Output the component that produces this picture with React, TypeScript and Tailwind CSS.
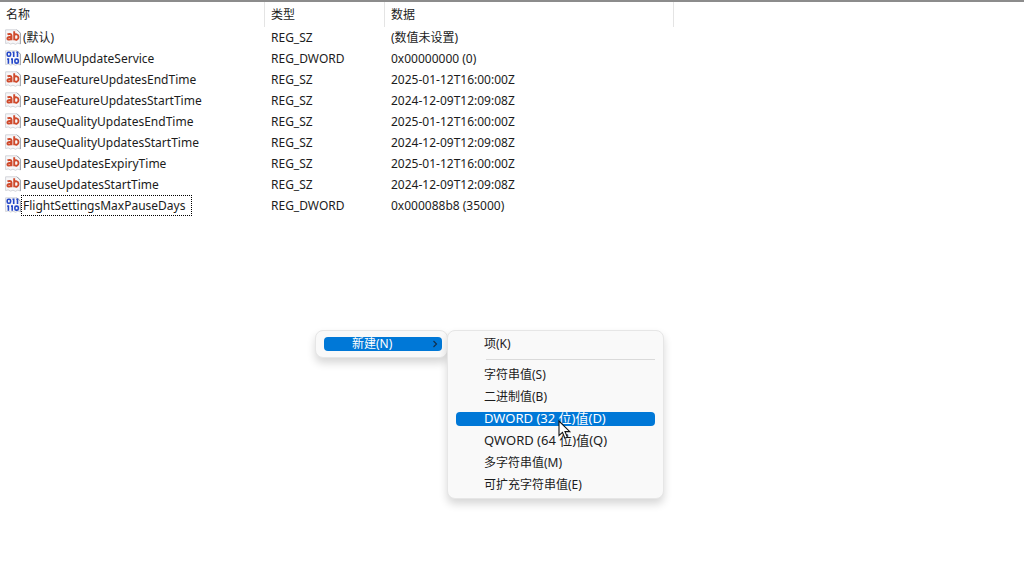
import clsx from 'clsx';

type RegistryValue = {
  name: string;
  type: 'REG_SZ' | 'REG_DWORD';
  data: string;
  focused?: boolean;
};

const values: RegistryValue[] = [
  { name: '(默认)', type: 'REG_SZ', data: '(数值未设置)' },
  { name: 'AllowMUUpdateService', type: 'REG_DWORD', data: '0x00000000 (0)' },
  { name: 'PauseFeatureUpdatesEndTime', type: 'REG_SZ', data: '2025-01-12T16:00:00Z' },
  { name: 'PauseFeatureUpdatesStartTime', type: 'REG_SZ', data: '2024-12-09T12:09:08Z' },
  { name: 'PauseQualityUpdatesEndTime', type: 'REG_SZ', data: '2025-01-12T16:00:00Z' },
  { name: 'PauseQualityUpdatesStartTime', type: 'REG_SZ', data: '2024-12-09T12:09:08Z' },
  { name: 'PauseUpdatesExpiryTime', type: 'REG_SZ', data: '2025-01-12T16:00:00Z' },
  { name: 'PauseUpdatesStartTime', type: 'REG_SZ', data: '2024-12-09T12:09:08Z' },
  { name: 'FlightSettingsMaxPauseDays', type: 'REG_DWORD', data: '0x000088b8 (35000)', focused: true },
];

const newItems = [
  '字符串值(S)',
  '二进制值(B)',
  'DWORD (32 位)值(D)',
  'QWORD (64 位)值(Q)',
  '多字符串值(M)',
  '可扩充字符串值(E)',
];

function ValueIcon({ type }: { type: RegistryValue['type'] }) {
  return (
    <svg viewBox="0 0 16 16" className="mb-0.5 h-4 w-4 shrink-0" aria-hidden="true">
      <path d="M.6 .8h11.4l3.4 3.4V15l-2.6-.9-2.3 1.2-2.5-1.1-2.4.9-2.4-1.2-2.6.6z" fill="#f7f7f9" stroke="#c9cbd1" strokeWidth=".8" />
      <path d="M12 .8l3.4 3.4V15" fill="none" stroke="#9a9da6" strokeWidth=".9" />
      {type === 'REG_SZ' ? (
        <g fill="none" stroke="#cf4a2c" strokeWidth="1.9">
          <path d="M2.5 5.6c1.2-.9 4-.9 4 1v4.6M6.5 7.8c-2.4-.1-4.1.2-4.1 1.6 0 1.7 3 1.6 4.1 0" />
          <path d="M9.2 2.2v9M9.2 6.3c1-1.6 4.3-1.4 4.3 1.8s-3.2 3.2-4.3 1.6" />
        </g>
      ) : (
        <g fill="none" stroke="#2447c8" strokeWidth="1.6">
          <rect x="2.2" y="2.2" width="3.4" height="4" rx="1.4" />
          <path d="M8.7 1.4v5.6M12.5 1.4v5.6M7.5 2.2h1.2M11.3 2.2h1.2" />
          <path d="M3.4 8.3v5.5M7.2 8.3v5.5M2.2 9.1h1.2M6 9.1h1.2" />
          <rect x="9.9" y="9.1" width="3.4" height="4" rx="1.4" />
        </g>
      )}
    </svg>
  );
}

function ValueTable() {
  return (
    <table className="w-full table-fixed border-separate border-spacing-0 text-left">
      <colgroup>
        <col className="w-[265px]" />
        <col className="w-[120px]" />
        <col className="w-[289px]" />
        <col />
      </colgroup>
      <thead>
        <tr className="h-[25px]">
          <th className="border-r border-[#e4e4e4] py-0 pl-1.5 font-normal">名称</th>
          <th className="border-r border-[#e4e4e4] py-0 pl-1.5 font-normal">类型</th>
          <th className="border-r border-[#e4e4e4] py-0 pl-1.5 font-normal">数据</th>
          <td />
        </tr>
      </thead>
      <tbody>
        {values.map((value) => (
          <tr key={value.name} className="h-[21px] whitespace-nowrap">
            <td className="py-0 pl-[5px]">
              <div className="flex h-[21px] items-center">
                <ValueIcon type={value.type} />
                <span
                  className={clsx(
                    'border px-px leading-[19px]',
                    value.focused ? 'border-dotted border-black pr-1.5' : 'border-transparent'
                  )}
                >
                  {value.name}
                </span>
              </div>
            </td>
            <td className="py-0 pl-1.5">{value.type}</td>
            <td className="py-0 pl-1.5">{value.data}</td>
            <td />
          </tr>
        ))}
      </tbody>
    </table>
  );
}

function Cursor() {
  return (
    <svg viewBox="0 0 14 20" className="pointer-events-none absolute top-[89px] left-[110px] h-5 w-3.5" aria-hidden="true">
      <path d="M1 1v14.5l3.5-3.1 2.4 5.8 2.5-1-2.4-5.6h4.8z" fill="#fff" stroke="#111" strokeWidth="1.1" />
    </svg>
  );
}

const panel = 'rounded-lg border border-[#e6e6e6] bg-[#f9f9f9] shadow-[0_5px_8px_rgba(0,0,0,0.16)]';
const item = 'flex h-3.5 items-center rounded text-left whitespace-nowrap';

function ContextMenu() {
  return (
    <div className="absolute top-[328px] left-[315px] flex items-start">
      <div role="menu" className={clsx(panel, 'w-[133px] py-1.5 pr-[5px] pl-2')}>
        <button role="menuitem" aria-haspopup="menu" className={clsx(item, 'w-full justify-between bg-[#0078d7] pr-1 pl-7 text-white')}>
          新建(N)
          <svg viewBox="0 0 6 8" className="h-2 w-1.5" aria-hidden="true">
            <path d="M1.5 1l3 3-3 3" fill="none" stroke="#12304d" strokeWidth="1.2" />
          </svg>
        </button>
      </div>
      <div role="menu" className={clsx(panel, 'relative -ml-px w-[217px] py-1.5 pr-2 pl-2')}>
        <button role="menuitem" className={clsx(item, 'w-full pl-7')}>
          项(K)
        </button>
        <hr className="mt-2 mb-2 ml-[30px] border-[#dadada]" />
        <div className="flex flex-col gap-2">
          {newItems.map((label) => (
            <button
              key={label}
              role="menuitem"
              className={clsx(
                item,
                'w-full pl-7',
                label.includes('WORD') && 'text-[13px]',
                label.startsWith('DWORD') && 'bg-[#0078d7] text-white'
              )}
            >
              {label}
            </button>
          ))}
        </div>
        <Cursor />
      </div>
    </div>
  );
}

export default function App() {
  return (
    <main className="relative min-h-screen border-t-2 border-[#8c8c8c] bg-white font-['Noto_Sans','Noto_Sans_CJK_SC',sans-serif] text-xs text-[#1c1c1c]">
      <ValueTable />
      <ContextMenu />
    </main>
  );
}
